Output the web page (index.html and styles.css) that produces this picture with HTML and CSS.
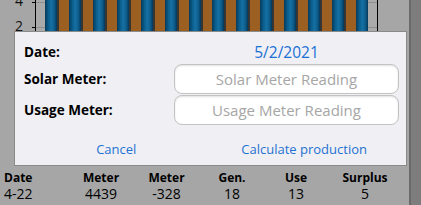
FILE: index.html
```html
<!DOCTYPE html>
<html lang="en">
<head>
    <meta charset="UTF-8">
    <meta name="viewport" content="width=device-width, initial-scale=1.0">
    <title>Solar production</title>
    <link rel="stylesheet" href="styles.css">
</head>
<body>
    <div class="screen">
        <div class="main">
            <div class="chart">
                <div class="y-axis">
                    <span class="tick-label tick-4">4</span>
                    <span class="tick-label tick-2">2</span>
                </div>
                <div class="plot">
                    <div class="grid-line line-4"></div>
                    <div class="grid-line line-2"></div>
                    <div class="bars">
                        <div class="bar blue"></div><div class="bar orange"></div>
                        <div class="bar blue"></div><div class="bar orange"></div>
                        <div class="bar blue"></div><div class="bar orange"></div>
                        <div class="bar blue"></div><div class="bar orange"></div>
                        <div class="bar blue"></div><div class="bar orange"></div>
                        <div class="bar blue"></div><div class="bar orange"></div>
                        <div class="bar blue"></div><div class="bar orange"></div>
                        <div class="bar blue"></div><div class="bar orange"></div>
                        <div class="bar blue"></div><div class="bar orange"></div>
                        <div class="bar blue"></div><div class="bar orange"></div>
                        <div class="bar blue"></div><div class="bar orange"></div>
                        <div class="bar blue"></div><div class="bar orange"></div>
                        <div class="bar blue"></div><div class="bar orange"></div>
                        <div class="bar blue"></div>
                    </div>
                </div>
            </div>

            <div class="table">
                <div class="cell head first">Date</div>
                <div class="cell head">Meter</div>
                <div class="cell head">Meter</div>
                <div class="cell head">Gen.</div>
                <div class="cell head">Use</div>
                <div class="cell head">Surplus</div>

                <div class="cell first">4-22</div>
                <div class="cell">4439</div>
                <div class="cell">-328</div>
                <div class="cell">18</div>
                <div class="cell">13</div>
                <div class="cell">5</div>
            </div>
        </div>
        <div class="scrollbar"></div>
    </div>

    <div class="dialog">
        <div class="form">
            <div class="label">Date:</div>
            <div class="date-value">5/2/2021</div>

            <div class="label">Solar Meter:</div>
            <div class="field"><input type="text" placeholder="Solar Meter Reading"></div>

            <div class="label">Usage Meter:</div>
            <div class="field"><input type="text" placeholder="Usage Meter Reading"></div>
        </div>
        <div class="actions">
            <button class="link-button">Cancel</button>
            <button class="link-button">Calculate production</button>
        </div>
    </div>
</body>
</html>
```

FILE: styles.css
```css
html, body {
    margin: 0;
    height: 100%;
}
body {
    font-family: "Open Sans", "Noto Sans", sans-serif;
    background-color: #a6a6a6;
    overflow: hidden;
    position: relative;
}
.screen {
    display: flex;
    height: 205px;
}
.main {
    flex: 1;
    display: flex;
    flex-direction: column;
}
.scrollbar {
    width: 10px;
    background-color: #7d7d7d;
    border-left: 2px solid #6a6a6a;
}

/* chart */
.chart {
    display: flex;
    height: 166px;
}
.y-axis {
    position: relative;
    width: 35px;
    border-right: 1px solid #000;
}
.tick-label {
    position: absolute;
    right: 12px;
    font-size: 14px;
    line-height: 16px;
    color: #111;
}
.tick-4 { top: -7px; }
.tick-2 { top: 18px; }
.y-axis::before,
.y-axis::after {
    content: "";
    position: absolute;
    right: 0;
    width: 3px;
    height: 1px;
    background: #000;
}
.y-axis::before { top: 2px; }
.y-axis::after { top: 27px; }
.plot {
    position: relative;
    width: 341px;
    background-color: #aaaaaa;
    border-right: 1px solid #000;
}
.grid-line {
    position: absolute;
    left: 0;
    right: 0;
    height: 1px;
    background: #8f8f8f;
}
.line-4 { top: 2px; }
.line-2 { top: 27px; }
.bars {
    position: relative;
    display: flex;
    width: 323px;
    height: 100%;
    margin-left: 9px;
}
.bar {
    height: 100%;
}
.bar.blue {
    width: 12px;
    background: linear-gradient(to right, #063a5a, #0b5f8f 30%, #1670a2 55%, #0b5a88 80%, #06375a);
}
.bar.orange {
    flex: 1;
    background-color: #9b5f22;
    border-left: 2px solid #353535;
}

/* table */
.table {
    display: grid;
    grid-template-columns: 64px 66px 65px 66px 62px 76px;
    padding-left: 4px;
    margin-top: 4px;
}
.cell {
    text-align: center;
    font-size: 14px;
    line-height: 16px;
    color: #000;
    white-space: nowrap;
}
.cell.head {
    font-weight: bold;
    font-size: 12px;
}
.cell.first {
    text-align: left;
}

/* dialog */
.dialog {
    position: absolute;
    left: 14px;
    top: 31px;
    width: 391px;
    height: 125px;
    background-color: #efeff4;
    border: 1px solid #8a8a8a;
    padding-top: 8px;
}
.form {
    display: grid;
    grid-template-columns: 150px 225px;
    grid-template-rows: 24px 31px 31px;
    padding-left: 9px;
}
.label {
    font-weight: bold;
    font-size: 13.5px;
    color: #000;
    display: flex;
    align-items: center;
    padding-bottom: 1px;
}
.date-value {
    color: #1a6fd4;
    font-size: 15.5px;
    display: flex;
    align-items: center;
    justify-content: center;
}
.field input {
    width: 100%;
    height: 30px;
    box-sizing: border-box;
    border: 1px solid #c3c3c3;
    border-radius: 8px;
    background: #fff;
    box-shadow: inset 0 1px 2px rgba(0, 0, 0, 0.12);
    font-family: inherit;
    font-size: 15px;
    text-align: center;
    padding: 0 6px;
}
.field input::placeholder {
    color: #a6a6a6;
}
.actions {
    display: flex;
    justify-content: flex-end;
    gap: 81px;
    margin-top: 13px;
    padding-right: 27px;
}
.link-button {
    background: transparent;
    border: none;
    color: #1f72d2;
    font-family: inherit;
    font-size: 13px;
    line-height: 20px;
    padding: 0 12px;
    cursor: pointer;
}
```
